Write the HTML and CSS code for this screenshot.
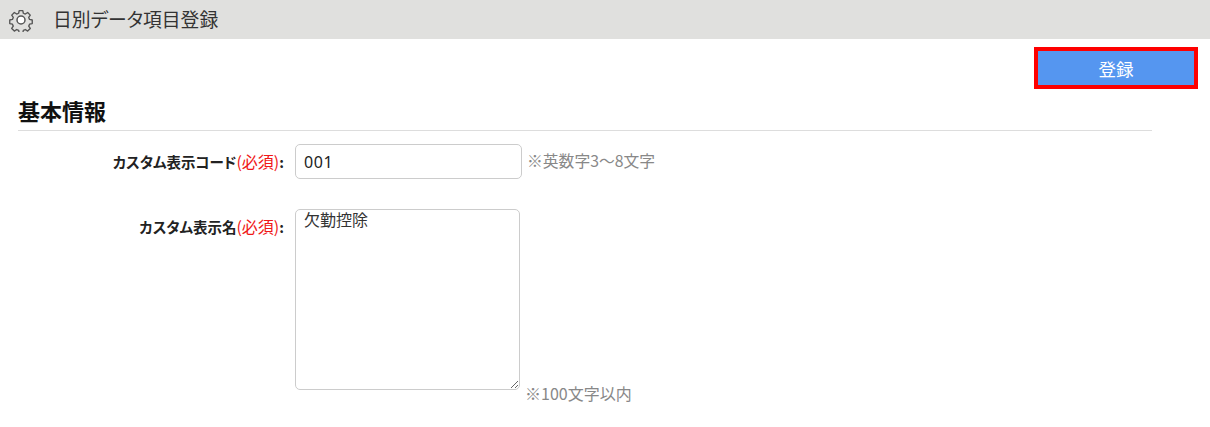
FILE: index.html
```html
<!DOCTYPE html>
<html lang="ja">
<head>
<meta charset="utf-8">
<title>日別データ項目登録</title>
<link rel="stylesheet" href="styles.css">
</head>
<body>
<header class="page-head">
  <svg class="gear" width="24" height="24" viewBox="0 0 24 24" fill="none" stroke="#555" stroke-width="1.5" stroke-linejoin="round">
    <path d="M10 1.5h4l.6 3 2.2.9 2.6-1.7 2.9 2.9-1.7 2.6.9 2.2 3 .6v4l-3 .6-.9 2.2 1.7 2.6-2.9 2.9-2.6-1.7-2.2.9-.6 3h-4l-.6-3-2.2-.9-2.6 1.7-2.9-2.9 1.7-2.6-.9-2.2-3-.6v-4l3-.6.9-2.2-1.7-2.6 2.9-2.9 2.6 1.7 2.2-.9z" transform="translate(1.2 1.2) scale(.9)"/>
    <circle class="gear-hub" cx="12" cy="12" r="4"/>
  </svg>
  <h1 class="page-title">日別データ項目登録</h1>
</header>
<main class="content">
  <div class="actions"><button class="btn-primary" type="button">登録</button></div>
  <h2 class="section-title">基本情報</h2>
  <form class="form">
    <div class="row row-code">
      <label class="label">カスタム表示コード<span class="req">(必須)</span>:</label>
      <input class="input" type="text" value="001">
      <span class="hint">※英数字3～8文字</span>
    </div>
    <div class="row row-name">
      <label class="label">カスタム表示名<span class="req">(必須)</span>:</label>
      <textarea class="textarea">欠勤控除</textarea>
      <span class="hint hint-bottom">※100文字以内</span>
    </div>
  </form>
</main>
</body>
</html>
```
FILE: styles.css
```css
* { box-sizing: border-box; }
html, body { margin: 0; padding: 0; }
body {
  background: #fff;
  color: #222;
  font-family: "Noto Sans CJK JP", "Noto Sans", sans-serif;
  overflow: hidden;
}
.page-head {
  display: flex;
  align-items: center;
  height: 39px;
  background: #e0e0de;
  padding-left: 9px;
}
.gear { flex: none; }
.gear-hub { fill: #fff; }
.page-title {
  margin: 0 0 0 20px;
  font-size: 18.8px;
  font-weight: 400;
  font-feature-settings: "palt";
  color: #333;
  line-height: 1;
}
.content { padding: 0 0 0 18px; }
.actions {
  display: flex;
  justify-content: flex-end;
  padding: 8px 12px 0 0;
}
.btn-primary {
  width: 164px;
  height: 42px;
  background: #5596f0;
  border: 4px solid #fe0000;
  color: #fff;
  font: inherit;
  font-size: 17.5px;
  padding: 0;
}
.section-title {
  width: 1134px;
  height: 42px;
  margin: 0;
  padding-top: 7px;
  font-size: 22px;
  font-weight: 700;
  line-height: 29px;
  color: #111;
  border-bottom: 1px solid #ddd;
}
.form { padding-top: 13px; }
.row {
  display: flex;
  align-items: flex-start;
}
.row-name { margin-top: 30px; }
.label {
  width: 269px;
  flex: none;
  padding: 7px 3px 0 0;
  text-align: right;
  font-size: 14.5px;
  font-weight: 700;
  font-feature-settings: "palt";
  line-height: 20px;
  color: #222;
}
.req { color: #f01818; font-weight: 400; font-size: 16px; }
.input {
  width: 227px;
  height: 35px;
  margin-left: 8px;
  padding: 0 8px;
  border: 1px solid #ccc;
  border-radius: 5px;
  font-family: "Noto Sans", sans-serif;
  font-size: 16px;
  letter-spacing: 0.6px;
  color: #222;
  background: #fff;
}
.textarea {
  display: block;
  width: 225px;
  height: 181px;
  margin-left: 8px;
  padding: 0 8px;
  border: 1px solid #ccc;
  border-radius: 5px;
  font-family: "Noto Sans CJK JP", sans-serif;
  font-size: 16px;
  line-height: 18px;
  color: #333;
  background: #fff;
}
.hint {
  margin-left: 5px;
  padding-top: 7px;
  font-size: 15.8px;
  line-height: 20px;
  color: #888;
}
.hint-bottom {
  margin-left: 5px;
  padding-top: 174px;
  font-size: 16px;
}
```
